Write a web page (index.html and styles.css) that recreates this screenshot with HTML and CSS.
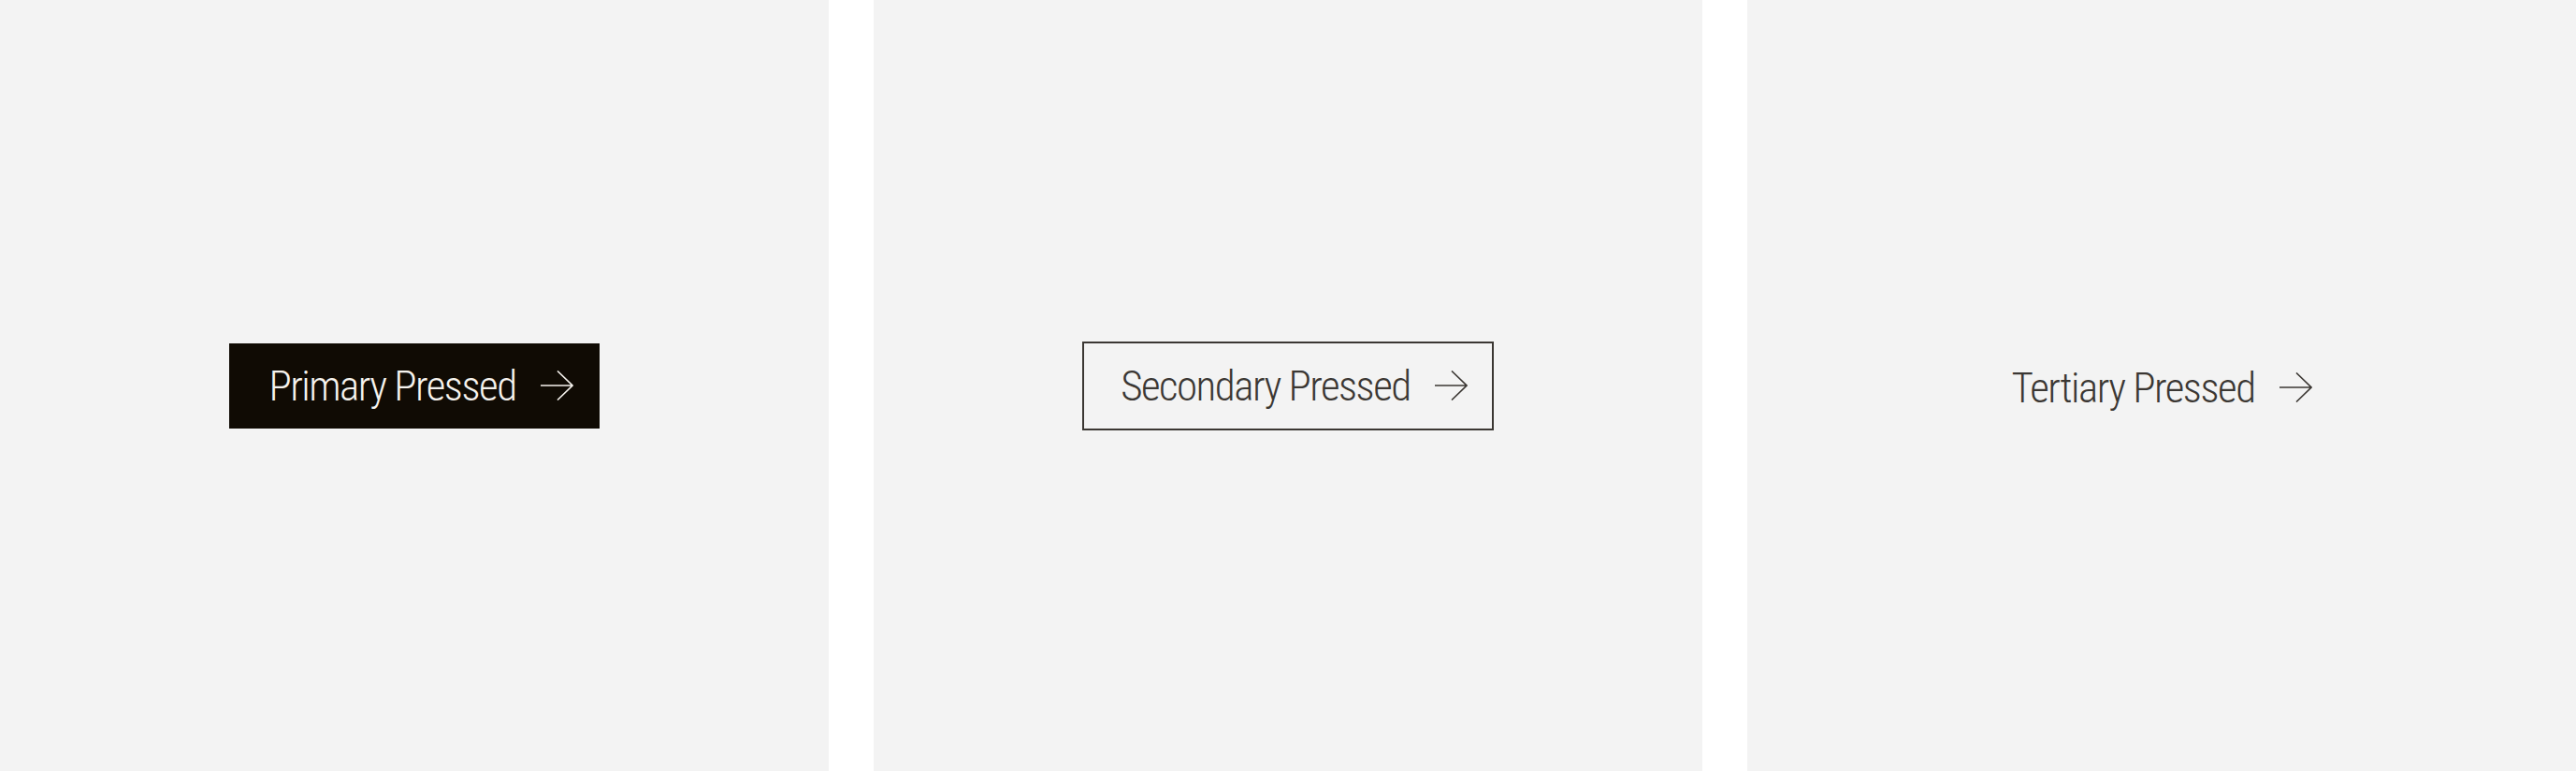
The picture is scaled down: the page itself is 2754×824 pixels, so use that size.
FILE: index.html
```html
<!DOCTYPE html>
<html lang="en">
<head>
    <meta charset="UTF-8">
    <meta name="viewport" content="width=device-width, initial-scale=1.0">
    <title>Buttons - Pressed</title>
    <link rel="stylesheet" href="styles.css">
</head>
<body>
    <div class="panels">
        <!-- Primário -->
        <section class="panel">
            <button class="btn btn-primary">
                <span class="btn-label">Primary Pressed</span>
                <svg class="btn-arrow" viewBox="0 0 36 32" aria-hidden="true">
                    <path d="M1 16 H35 M19 0.5 L35 16 L19 31.5"/>
                </svg>
            </button>
        </section>

        <!-- Secundário -->
        <section class="panel">
            <button class="btn btn-secondary">
                <span class="btn-label">Secondary Pressed</span>
                <svg class="btn-arrow" viewBox="0 0 36 32" aria-hidden="true">
                    <path d="M1 16 H35 M19 0.5 L35 16 L19 31.5"/>
                </svg>
            </button>
        </section>

        <!-- Terciário -->
        <section class="panel">
            <button class="btn btn-tertiary">
                <span class="btn-label">Tertiary Pressed</span>
                <svg class="btn-arrow" viewBox="0 0 36 32" aria-hidden="true">
                    <path d="M1 16 H35 M19 0.5 L35 16 L19 31.5"/>
                </svg>
            </button>
        </section>
    </div>
</body>
</html>
```

FILE: styles.css
```css
/* Reset */
* {
    margin: 0;
    padding: 0;
    box-sizing: border-box;
}

body {
    background-color: #fff;
    font-family: "Roboto Condensed", "Liberation Sans Narrow", "DejaVu Sans Condensed", sans-serif;
    height: 100vh;
}

/* Três painéis lado a lado */
.panels {
    display: grid;
    grid-template-columns: repeat(3, 1fr);
    gap: 48px;
    height: 100%;
}

.panel {
    background-color: #f3f3f3;
    display: flex;
    align-items: center;
    justify-content: center;
}

/* Botão base */
.btn {
    display: flex;
    align-items: center;
    gap: 25px;
    font-family: inherit;
    font-size: 45px;
    font-weight: 300;
    letter-spacing: -1.5px;
    line-height: 1;
    background: none;
    border: none;
    cursor: pointer;
}

.btn-arrow {
    width: 36px;
    height: 32px;
    fill: none;
    stroke: currentColor;
    stroke-width: 1.6;
}

.btn-primary {
    background-color: #100b04;
    color: #f6f3ee;
    padding: 23px 28px 23px 42px;
}

.btn-secondary {
    color: #3b3733;
    border: 2px solid #3b3733;
    padding: 23px 26px 23px 39px;
}

.btn-tertiary {
    color: #3b3733;
    padding: 25px 0 21px 0;
}
```
